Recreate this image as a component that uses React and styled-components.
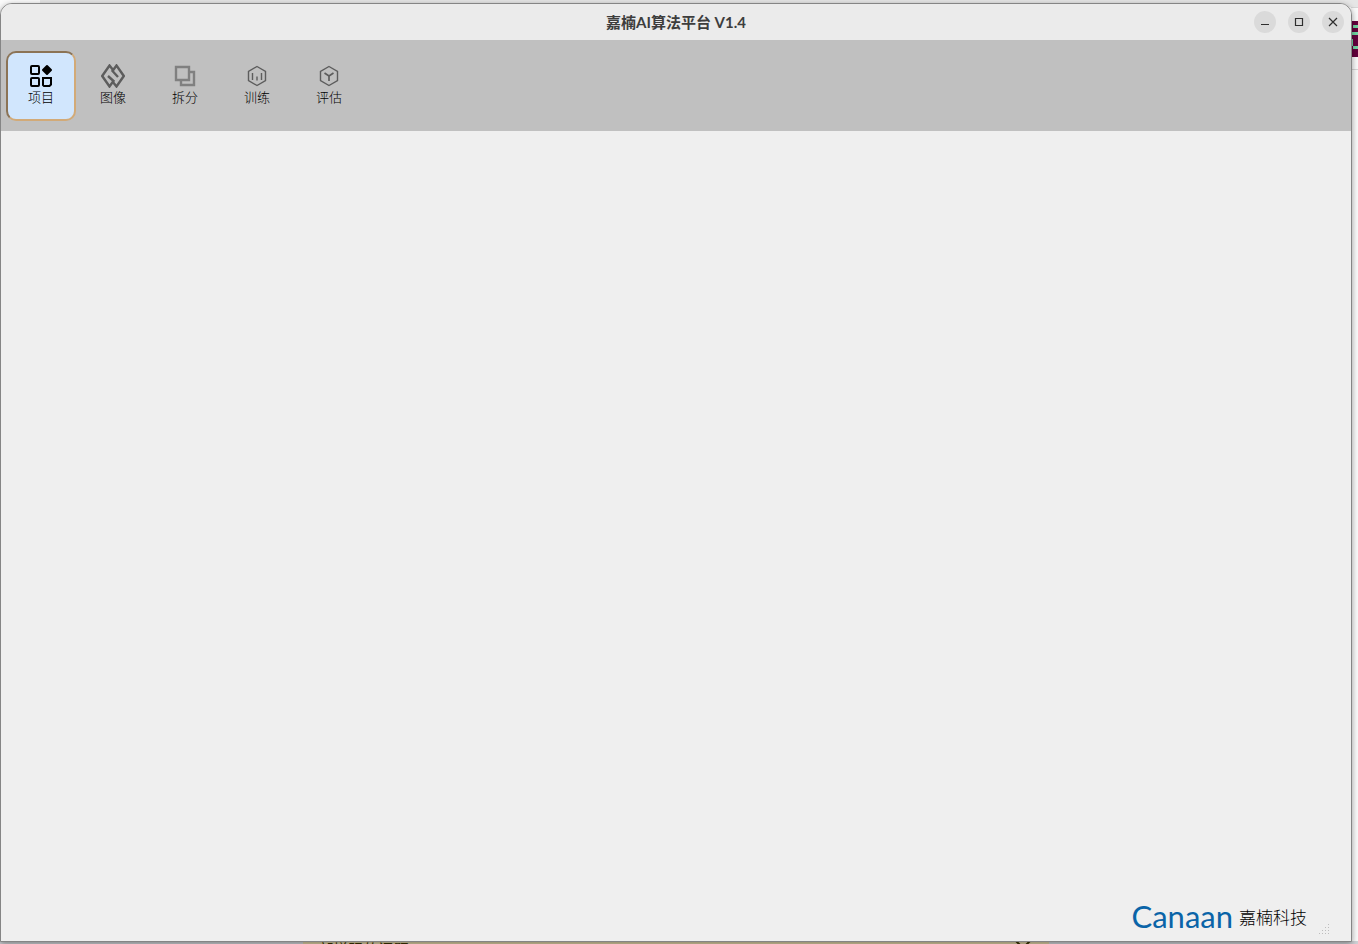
import React from "react";
import styled, { createGlobalStyle } from "styled-components";

const GlobalStyle = createGlobalStyle`
  * { box-sizing: border-box; }
  body {
    margin: 0;
    font-family: "Noto Sans", "Noto Sans CJK SC", sans-serif;
  }
`;

const Desktop = styled.div`
  position: relative;
  min-height: 100vh;
  display: flex;
  flex-direction: column;
  padding: 3px 6px 2px 0;
  overflow: hidden;
  background: #fafafa;
`;

const Behind = styled.div`
  position: absolute;
  inset: 0;
  display: flex;
  flex-direction: column;
  justify-content: space-between;
`;

const BehindTop = styled.div`
  height: 7px;
  margin-left: 40px;
  background: #e6e6e6;
`;

const BehindBottom = styled.div`
  height: 3px;
  display: flex;
  justify-content: center;
  overflow: hidden;
  background: #d0d2d6;
`;

const Notice = styled.div`
  width: 55%;
  display: flex;
  justify-content: space-between;
  margin-right: 6px;
  padding: 0 16px;
  background: #dccfa4;
  color: #3a3200;
  font-size: 15px;
  line-height: 16px;
`;

const Badge = styled.svg`
  position: absolute;
  top: 21px;
  right: 0;
`;

const Rule = styled.div`
  position: absolute;
  top: ${(p) => p.$top}px;
  right: 0;
  width: 7px;
  height: 1px;
  background: #d6d6d6;
`;

const Window = styled.main`
  position: relative;
  flex: 1;
  display: flex;
  flex-direction: column;
  border: 1px solid #858585;
  border-radius: 12px 12px 0 0;
  overflow: hidden;
  background: #efefef;
  box-shadow: 0 2px 6px rgba(0, 0, 0, 0.4);
`;

const TitleBar = styled.header`
  display: grid;
  grid-template-columns: 1fr auto 1fr;
  align-items: center;
  height: 36px;
  padding: 0 7px;
  background: #ebebeb;
`;

const Title = styled.h1`
  grid-column: 2;
  margin: 0;
  font-family: Lato, "Noto Sans CJK SC", sans-serif;
  font-size: 15px;
  line-height: 20px;
  font-weight: 700;
  color: #3d3d3d;
`;

const Controls = styled.div`
  justify-self: end;
  display: flex;
  gap: 12px;
`;

const ControlButton = styled.button`
  display: grid;
  place-items: center;
  width: 22px;
  height: 22px;
  padding: 0;
  border: 0;
  border-radius: 50%;
  background: #dadada;
  color: #2e2e2e;
`;

const Toolbar = styled.nav`
  display: flex;
  gap: 2px;
  height: 91px;
  padding: 11px 5px;
  background: #c0c0c0;
`;

const ToolButton = styled.button`
  display: flex;
  flex-direction: column;
  align-items: center;
  width: 70px;
  height: 70px;
  padding: 11px 0 0;
  border: 2px solid transparent;
  border-color: ${(p) => (p.$active ? "#8b7355 #d2aa78 #d2aa78 #8b7355" : "transparent")};
  border-radius: 10px;
  background: ${(p) => (p.$active ? "#d1e6fd" : "transparent")};
  color: #000;
  font-family: "Noto Sans CJK SC", sans-serif;
  font-size: 13px;
  font-weight: 300;
  line-height: 18px;
`;

const Content = styled.section`
  flex: 1;
`;

const Footer = styled.footer`
  display: flex;
  justify-content: flex-end;
  align-items: flex-end;
  padding: 0 21px 6px 0;
`;

const Brand = styled.div`
  display: flex;
  align-items: center;
  gap: 6px;
  margin-right: 12px;
`;

const Wordmark = styled.span`
  padding-bottom: 2px;
  font-family: Lato, sans-serif;
  font-size: 31px;
  line-height: 34px;
  color: #0a64a8;
`;

const BrandName = styled.span`
  font-family: "Noto Sans CJK SC", sans-serif;
  font-size: 17px;
  font-weight: 300;
  line-height: 24px;
  color: #000;
`;

const icons = {
  project: (
    <g fill="none" stroke="#000" strokeWidth="2">
      <rect x="2" y="2" width="8" height="8" rx="1" />
      <rect x="2" y="14" width="8" height="8" rx="1" />
      <path d="M14 14h8v6.500l-1.500 1.500H15l-1-1z" />
      <path d="M18 2l4 4-4 4-4-4z" fill="#000" strokeLinejoin="round" />
    </g>
  ),
  image: (
    <g fill="none" stroke="#5d5d5d" strokeWidth="2.400">
      <path d="M12.500 6.500L8.500 1.500 1.200 12l7.300 10.500 4-5.500-5.500-5" />
      <path d="M11.500 17.500l4 5L22.800 12 15.500 1.500l-4 5.500 5.500 6" />
    </g>
  ),
  split: (
    <g fill="none" stroke="#808080" strokeWidth="2.400">
      <path d="M3 3h13v13H3zM16 8h5v13H8v-5" />
    </g>
  ),
  train: (
    <g fill="none" stroke="#5d5d5d" strokeWidth="1.400">
      <path d="M12 2.500l8.500 4.800v9.400L12 21.500l-8.500-4.800V7.300z" />
      <path d="M7.500 9v7M16.500 9v7M12 12.500v4" />
    </g>
  ),
  evaluate: (
    <g fill="none" stroke="#5d5d5d" strokeWidth="1.400">
      <path d="M12 2.500l8.500 4.800v9.400L12 21.500l-8.500-4.800V7.300z" />
      <path d="M7.500 9l4.500 3 4.500-3M12 12v5" strokeWidth="1.700" />
    </g>
  ),
};

const tools = [
  { id: "project", label: "项目" },
  { id: "image", label: "图像" },
  { id: "split", label: "拆分" },
  { id: "train", label: "训练" },
  { id: "evaluate", label: "评估" },
];

const controls = [
  { label: "最小化", d: "M4 10.500h8" },
  { label: "最大化", d: "M4.500 4.500h7v7h-7z" },
  { label: "关闭", d: "M4 4l8 8M12 4l-8 8" },
];

const gripDots = [[9, 0], [6, 3], [9, 3], [3, 6], [6, 6], [9, 6], [0, 9], [3, 9], [6, 9], [9, 9]];

export default function App() {
  return (
    <>
      <GlobalStyle />
      <Desktop>
        <Behind aria-hidden="true">
          <BehindTop />
          <BehindBottom>
            <Notice>
              <span>部增强的问题</span>
              <svg width="20" height="10" viewBox="0 0 20 10" fill="none" stroke="#3a3200" strokeWidth="2">
                <path d="M3 0l7 7 7-7" />
              </svg>
            </Notice>
          </BehindBottom>
          <Rule $top={7} />
          <Rule $top={69} />
          <Badge width="7" height="36" viewBox="0 0 7 36">
            <path d="M0 0h7v36H0z" fill="#64003c" />
            <path d="M2 4h5v3H2zM0 11h7v3H0zM0 18h2v7H0zM2 25h5v3H2z" fill="#72d6a2" />
          </Badge>
        </Behind>
        <Window>
          <TitleBar>
            <Title>嘉楠AI算法平台 V1.4</Title>
            <Controls>
              {controls.map((c) => (
                <ControlButton key={c.label} type="button" aria-label={c.label}>
                  <svg width="16" height="16" viewBox="0 0 16 16" fill="none" stroke="currentColor" strokeWidth="1.200">
                    <path d={c.d} />
                  </svg>
                </ControlButton>
              ))}
            </Controls>
          </TitleBar>
          <Toolbar>
            {tools.map((t, i) => (
              <ToolButton key={t.id} type="button" $active={i === 0}>
                <svg width="24" height="24" viewBox="0 0 24 24">{icons[t.id]}</svg>
                {t.label}
              </ToolButton>
            ))}
          </Toolbar>
          <Content />
          <Footer>
            <Brand>
              <Wordmark>Canaan</Wordmark>
              <BrandName>嘉楠科技</BrandName>
            </Brand>
            <svg width="11" height="11" viewBox="0 0 11 11" fill="#bdbdbd">
              {gripDots.map(([x, y]) => (
                <rect key={`${x}-${y}`} x={x} y={y} width="1" height="1" />
              ))}
            </svg>
          </Footer>
        </Window>
      </Desktop>
    </>
  );
}
